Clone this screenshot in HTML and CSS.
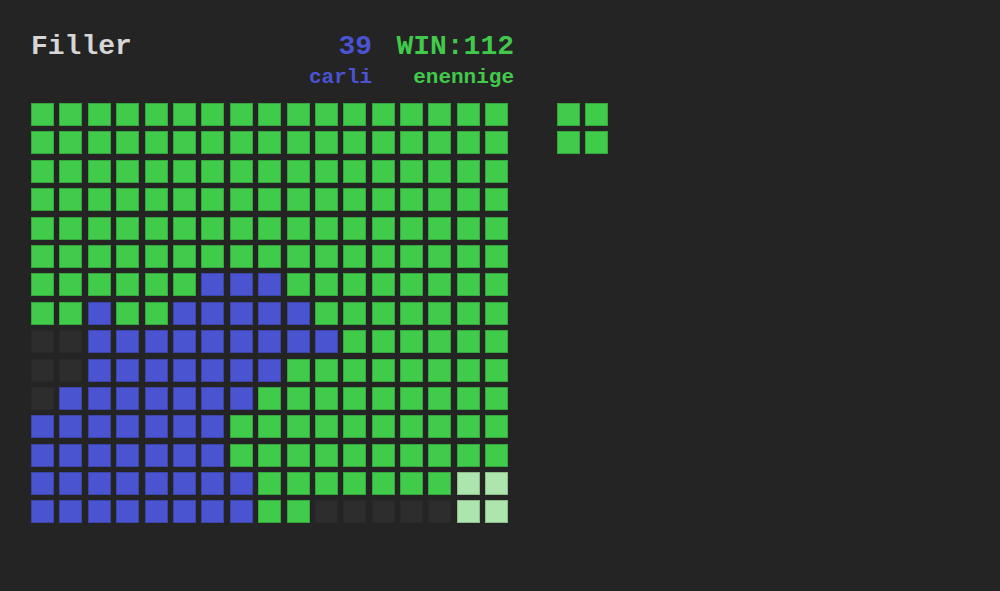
FILE: index.html
```html
<!DOCTYPE html>
<html lang="en">
<head>
    <meta charset="UTF-8">
    <meta name="viewport" content="width=device-width, initial-scale=1.0">
    <title>Filler</title>
    <link rel="stylesheet" href="styles.css">
</head>
<body>
    <div class="game">
        <div class="header">
            <div class="title">Filler</div>
            <div class="score p1">39</div>
            <div class="score p2">WIN:112</div>
            <div></div>
            <div class="name p1">carli</div>
            <div class="name p2">enennige</div>
        </div>

        <div class="play-area">
            <div class="board" id="board">
                <!-- cells are generated below -->
            </div>
            <div class="piece" id="piece"></div>
        </div>
    </div>

    <script>
        // o = player 2 (green), x = player 1 (blue), . = empty, n = new piece
        const map = [
            'ooooooooooooooooo',
            'ooooooooooooooooo',
            'ooooooooooooooooo',
            'ooooooooooooooooo',
            'ooooooooooooooooo',
            'ooooooooooooooooo',
            'ooooooxxxoooooooo',
            'ooxooxxxxxooooooo',
            '..xxxxxxxxxoooooo',
            '..xxxxxxxoooooooo',
            '.xxxxxxxooooooooo',
            'xxxxxxxoooooooooo',
            'xxxxxxxoooooooooo',
            'xxxxxxxxoooooooNN',
            'xxxxxxxxoo.....NN'
        ];
        const types = { o: 'green', x: 'blue', '.': 'empty', N: 'fresh' };

        const board = document.getElementById('board');
        map.forEach(row => {
            row.split('').forEach(ch => {
                const cell = document.createElement('div');
                cell.className = 'cell ' + types[ch];
                board.appendChild(cell);
            });
        });

        // next piece preview (2x2)
        const piece = document.getElementById('piece');
        for (let i = 0; i < 4; i++) {
            const cell = document.createElement('div');
            cell.className = 'cell green';
            piece.appendChild(cell);
        }
    </script>
</body>
</html>
```

FILE: styles.css
```css
body {
    margin: 0;
    background-color: #242424;
    font-family: "Liberation Mono", "Courier New", monospace;
    font-weight: bold;
}

.game {
    padding: 31px 0 0 31px;
}

.header {
    display: grid;
    grid-template-columns: 1fr 64px 119px;
    column-gap: 23px;
    width: 483px;
    margin-bottom: 13px;
}

.title {
    color: #d6d6d6;
    font-size: 28px;
    line-height: 32px;
}

.score {
    font-size: 28px;
    line-height: 32px;
    text-align: right;
    margin-bottom: 3px;
}

.name {
    font-size: 21px;
    line-height: 24px;
    text-align: right;
}

.p1 {
    color: #4b53d3;
}

.p2 {
    color: #42c94c;
}

.play-area {
    display: flex;
    align-items: flex-start;
    gap: 48.6px;
}

.board {
    display: grid;
    grid-template-columns: repeat(17, 23px);
    grid-auto-rows: 23px;
    gap: 5.4px;
}

.piece {
    display: grid;
    grid-template-columns: repeat(2, 23px);
    grid-auto-rows: 23px;
    gap: 5.4px;
}

.cell {
    box-sizing: border-box;
    border: 1px solid rgba(0, 0, 0, 0.18);
}

.cell.green {
    background-color: #41cb4b;
}

.cell.blue {
    background-color: #4a53d0;
}

.cell.empty {
    background-color: #2d2d2d;
    border-color: rgba(0, 0, 0, 0.08);
}

.cell.fresh {
    background-color: #ade5ae;
}
```
